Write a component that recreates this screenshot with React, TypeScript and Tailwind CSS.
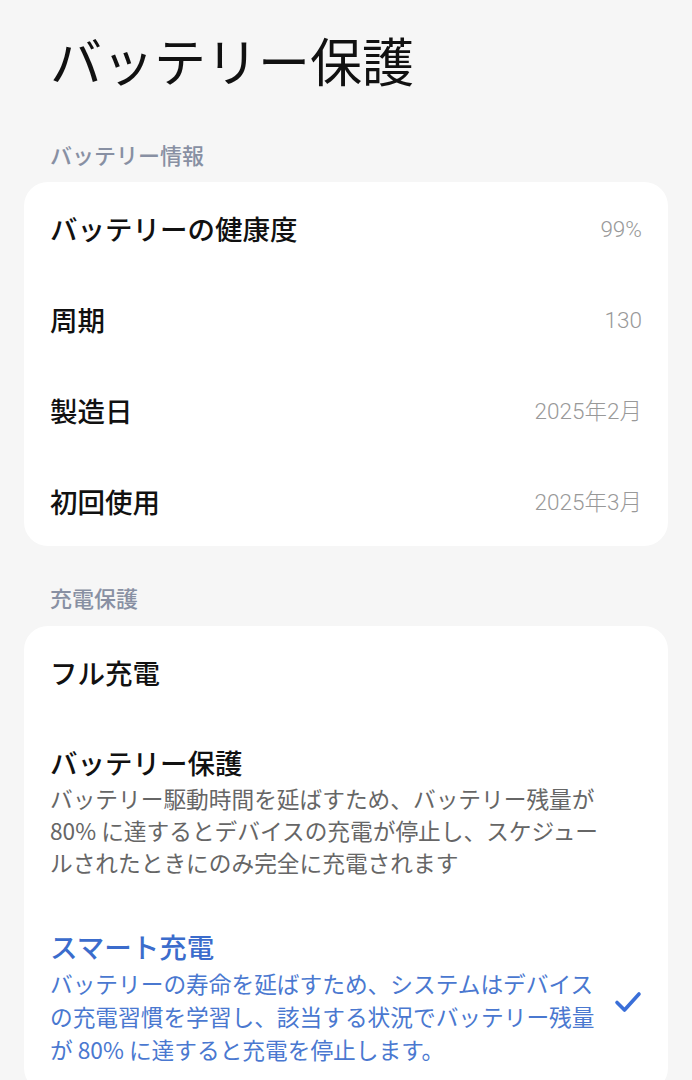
import React from "react";

const jp = { fontFamily: '"Noto Sans CJK JP", "Noto Sans", sans-serif' };
const num = { fontFamily: 'Roboto, "Noto Sans CJK JP", sans-serif' };

function InfoRow({ label, value }: { label: string; value: string }) {
  return (
    <div className="flex h-[91px] items-center justify-between px-[26px]">
      <span className="text-[27.5px] font-medium leading-[34px] text-[#111]">{label}</span>
      <span className="mt-[5px] text-[22.5px] font-light text-[#999]" style={num}>
        {value}
      </span>
    </div>
  );
}

export default function App() {
  return (
    <div className="min-h-screen bg-[#f6f6f6] px-[24px] pb-10" style={jp}>
      <h1 className="pl-[26px] pt-[29px] text-[52px] font-normal leading-[62px] text-[#111]">
        バッテリー保護
      </h1>

      <div className="mt-[48px] pl-[26px] text-[22px] font-medium leading-[30px] text-[#8890a3]">
        バッテリー情報
      </div>
      <div className="mt-[13px] rounded-[24px] bg-white">
        <InfoRow label="バッテリーの健康度" value="99%" />
        <InfoRow label="周期" value="130" />
        <InfoRow label="製造日" value="2025年2月" />
        <InfoRow label="初回使用" value="2025年3月" />
      </div>

      <div className="mt-[36px] pl-[26px] text-[22px] font-medium leading-[30px] text-[#8890a3]">
        充電保護
      </div>
      <div className="mt-[14px] rounded-[24px] bg-white">
        <div className="flex h-[91px] items-center px-[26px]">
          <span className="text-[27.5px] font-medium leading-[34px] text-[#111]">フル充電</span>
        </div>

        <div className="px-[26px] pb-[22px] pt-[28px]">
          <div className="text-[27.5px] font-medium leading-[34px] text-[#111]">バッテリー保護</div>
          <div className="mt-[4px] text-[22.7px] leading-[32px] text-[#666] whitespace-nowrap">
            <div>バッテリー駆動時間を延ばすため、バッテリー残量が</div>
            <div>80% に達するとデバイスの充電が停止し、スケジュー</div>
            <div>ルされたときにのみ完全に充電されます</div>
          </div>
        </div>

        <div className="flex items-center gap-[10px] px-[26px] pb-[26px] pt-[28px]">
          <div className="min-w-0 flex-1">
            <div className="text-[27.5px] font-medium leading-[34px] text-[#3b6ccc]">スマート充電</div>
            <div className="mt-[4px] text-[22.7px] leading-[33px] text-[#4a78d0] whitespace-nowrap">
              <div>バッテリーの寿命を延ばすため、システムはデバイス</div>
              <div>の充電習慣を学習し、該当する状況でバッテリー残量</div>
              <div>が 80% に達すると充電を停止します。</div>
            </div>
          </div>
          <svg width="28" height="22" viewBox="0 0 28 22" className="mt-[8px] shrink-0">
            <path
              d="M3 11.5 L10.5 19 L25 3"
              fill="none"
              stroke="#3a6fd8"
              strokeWidth="3.6"
              strokeLinecap="round"
              strokeLinejoin="round"
            />
          </svg>
        </div>
      </div>
    </div>
  );
}
